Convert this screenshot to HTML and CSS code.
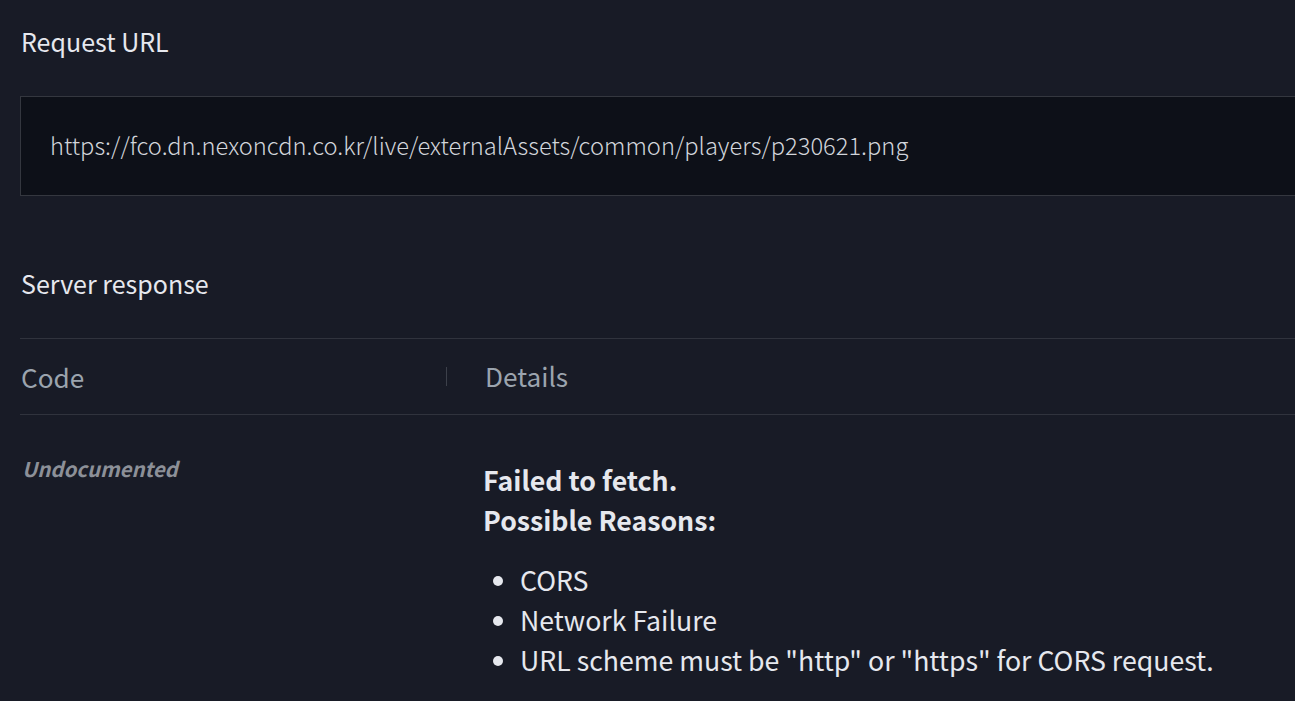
FILE: index.html
```html
<!DOCTYPE html>
<html>
<head>
<meta charset="utf-8">
<link rel="stylesheet" href="styles.css">
</head>
<body>
<div class="page">
  <h4 class="title">Request URL</h4>
  <div class="url-box">https://fco.dn.nexoncdn.co.kr/live/externalAssets/common/players/p230621.png</div>
  <h4 class="title server">Server response</h4>
  <div class="resp-head">
    <div class="col-code">Code</div>
    <div class="col-details">Details</div>
  </div>
  <div class="resp-row">
    <div class="code-cell">Undocumented</div>
    <div class="details-cell">
      <div class="err">Failed to fetch.<br>Possible Reasons:</div>
      <ul class="reasons">
        <li>CORS</li>
        <li>Network Failure</li>
        <li>URL scheme must be "http" or "https" for CORS request.</li>
      </ul>
    </div>
  </div>
</div>
</body>
</html>
```
FILE: styles.css
```css
html, body {
  margin: 0;
  padding: 0;
  background: #181b26;
  height: 100%;
  overflow: hidden;
}
.page {
  padding-left: 20px;
  font-family: "Noto Sans CJK KR", "Noto Sans", sans-serif;
  color: #e6e8ee;
}
.title {
  margin: 0;
  font-size: 25px;
  font-weight: 400;
  line-height: 36px;
  padding-top: 23px;
  padding-left: 1px;
}
.url-box {
  margin-top: 37px;
  height: 100px;
  box-sizing: border-box;
  background: #0d1018;
  border: 1px solid #34373f;
  border-right: none;
  padding: 30px 0 0 29px;
  font-size: 23.7px;
  font-weight: 300;
  line-height: 36px;
  color: #d2d5db;
  white-space: nowrap;
}
.server {
  padding-top: 69px;
}
.resp-head {
  margin-top: 37px;
  border-top: 1px solid #30333d;
  border-bottom: 1px solid #30333d;
  height: 77px;
  box-sizing: border-box;
  display: flex;
  align-items: center;
  font-size: 26.2px;
  color: #9ba4ae;
}
.col-code {
  width: 425px;
  padding-left: 1px;
  line-height: 36px;
}
.col-details {
  border-left: 1px solid #3c404a;
  padding-left: 38px;
  line-height: 19px;
  height: 19px;
  display: flex;
  align-items: flex-end;
}
.resp-row {
  display: flex;
  padding-top: 38px;
}
.code-cell {
  width: 461px;
  padding-left: 2px;
  font-size: 20.4px;
  font-weight: 700;
  font-style: italic;
  color: #8c9098;
  line-height: 30px;
}
.details-cell {
  font-size: 26.7px;
  line-height: 40px;
}
.err {
  font-weight: 700;
  padding-top: 7px;
}
.reasons {
  margin: 20px 0 0;
  padding-left: 37px;
  line-height: 40px;
  list-style: disc;
}
```
